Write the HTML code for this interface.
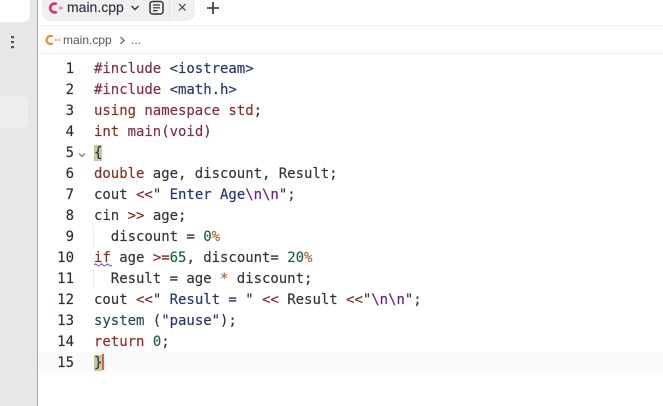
<!DOCTYPE html>
<html>
<head>
<meta charset="utf-8">
<style>
html,body{margin:0;padding:0;background:#fff}
body{width:663px;height:406px;position:relative;overflow:hidden;font-family:"Liberation Sans",sans-serif}
.abs{position:absolute}
.side{left:0;top:0;width:37px;height:406px;background:#e8e7e5}
.sep{left:37px;top:0;width:1px;height:406px;background:#a9a9a9}
.c1{left:-10px;top:-10px;width:40px;height:32px;background:#fff;border-radius:7px}
.c2{left:-10px;top:96px;width:38px;height:32px;background:#efeeec;border-radius:7px}
.tab{left:42px;top:-10px;width:153px;height:31px;background:#f1f0ee;border-radius:8px}
.tabsep{left:169px;top:0;width:1px;height:21px;background:#e2e1df}
.hr1{left:38px;top:25px;width:625px;height:1px;background:#eeeeee}
.hr2{left:38px;top:53px;width:625px;height:1px;background:#eeeeee}
.tabname{left:67px;top:-1px;font-size:14px;line-height:16px;color:#33334a;white-space:nowrap;-webkit-text-stroke:.15px #33334a}
.crumb{left:63px;top:33px;font-size:12px;line-height:14px;color:#555;white-space:nowrap}
.dots{left:131px;top:33px;font-size:12px;line-height:14px;color:#555}
.cur{left:38px;top:352px;width:625px;height:21px;background:#fafaf8}
.ln,.code{position:absolute;font-family:"DejaVu Sans Mono",monospace;font-size:14px;line-height:21px;white-space:pre;-webkit-text-stroke:.15px}
.ln{left:38px;width:36px;text-align:right;top:59px;color:#22323a}
.code{left:94px;top:59px;color:#333;letter-spacing:-.03px}
.k{color:#8a2c24}.p{color:#7a2a20}.s{color:#26346f}.e{color:#651c94}.n{color:#1f6140}.m{color:#a9652f}.f{color:#2c4a5a}.h{color:#842a48}
.br{background:#c5cba0}
.guide{width:1px;height:21px;background:#ececec}
.squig{left:94px;top:263px}
.caret{left:102px;top:354px;width:2px;height:16px;background:#e8574f}
</style>
</head>
<body>
<div class="abs side"></div>
<div class="abs c1"></div>
<div class="abs c2"></div>
<div class="abs sep"></div>
<div class="abs tab"></div>
<div class="abs tabsep"></div>
<div class="abs hr1"></div>
<div class="abs hr2"></div>
<div class="abs cur"></div>

<svg class="abs" style="left:11px;top:36px" width="4" height="13"><rect x="0" y="0" width="3" height="2.2" fill="#555"/><rect x="0" y="5" width="3" height="2.2" fill="#555"/><rect x="0" y="10" width="3" height="2.2" fill="#555"/></svg>

<svg class="abs" style="left:47px;top:1px" width="17" height="14" fill="none"><path d="M9.800 3.200A4.400 4.400 0 1 0 9.800 10.800" stroke="#d8366a" stroke-width="2.800"/><path d="M11.500 7h4.500M13.700 5.200v3.600" stroke="#e0734a" stroke-width="1.100"/></svg>
<div class="abs tabname">main.cpp</div>
<svg class="abs" style="left:130px;top:4px" width="10" height="8" fill="none"><path d="M1.500 2l3.500 3.500L8.500 2" stroke="#333" stroke-width="1.400"/></svg>
<svg class="abs" style="left:149px;top:0" width="16" height="16" fill="none"><rect x="1" y="1.500" width="13" height="12.500" rx="2.500" stroke="#333" stroke-width="1.500"/><path d="M4 5h7M4 7.800h7M4 10.600h4.500" stroke="#333" stroke-width="1.200"/></svg>
<svg class="abs" style="left:178px;top:3px" width="9" height="9" fill="none"><path d="M1 1l6.500 6.500M7.500 1L1 7.500" stroke="#444" stroke-width="1.200"/></svg>
<svg class="abs" style="left:206px;top:1px" width="14" height="14" fill="none"><path d="M7 1v12M1 7h12" stroke="#333" stroke-width="1.600"/></svg>

<svg class="abs" style="left:44px;top:34px" width="17" height="13" fill="none"><path d="M8.800 2.700A4 4 0 1 0 8.800 9.300" stroke="#e8912d" stroke-width="2.300"/><path d="M10.500 6h2.600M11.800 4.800v2.400M13.800 6h2.600M15.100 4.800v2.400" stroke="#eba050" stroke-width=".9"/></svg>
<div class="abs crumb">main.cpp</div>
<svg class="abs" style="left:119px;top:36px" width="7" height="9" fill="none"><path d="M1.500 1l3.500 3.500L1.500 8" stroke="#555" stroke-width="1.200"/></svg>
<div class="abs dots">...</div>

<div class="ln">1
2
3
4
5
6
7
8
9
10
11
12
13
14
15</div>
<svg class="abs" style="left:78px;top:152px" width="8" height="7" fill="none"><path d="M1 1.500l3 3 3-3" stroke="#666" stroke-width="1"/></svg>
<div class="abs guide" style="left:93px;top:226px"></div>
<div class="abs guide" style="left:93px;top:268px"></div>

<div class="code"><span class="h">#include</span> <span class="s">&lt;iostream&gt;</span>
<span class="h">#include</span> <span class="s">&lt;math.h&gt;</span>
<span class="k">using</span> <span class="h">namespace</span> <span class="k">std</span>;
<span class="k">int</span> <span class="h">main</span><span class="p">(</span><span class="h">void</span><span class="p">)</span>
<span class="br">{</span>
<span class="k">double</span> age, discount, Result;
cout <span class="p">&lt;&lt;</span>" <span class="s">Enter Age</span><span class="e">\n\n</span>";
cin <span class="p">&gt;&gt;</span> age;
  discount = <span class="n">0</span><span class="m">%</span>
<span class="k">if</span> age <span class="p">&gt;=</span><span class="n">65</span>, discount= <span class="n">20</span><span class="m">%</span>
  Result = age <span class="m">*</span> discount;
cout <span class="p">&lt;&lt;</span>" <span class="s">Result = </span>" <span class="p">&lt;&lt;</span> Result <span class="p">&lt;&lt;</span>"<span class="e">\n\n</span>";
<span class="f">system</span> (<span class="s">"pause"</span>);
<span class="k">return</span> <span class="n">0</span>;
<span class="br">}</span></div>
<svg class="abs squig" width="18" height="4" fill="none"><path d="M0 2q1.500-2 3 0t3 0 3 0 3 0 3 0 3 0" stroke="#3a55c8" stroke-width="1"/></svg>
<div class="abs caret"></div>
</body>
</html>
